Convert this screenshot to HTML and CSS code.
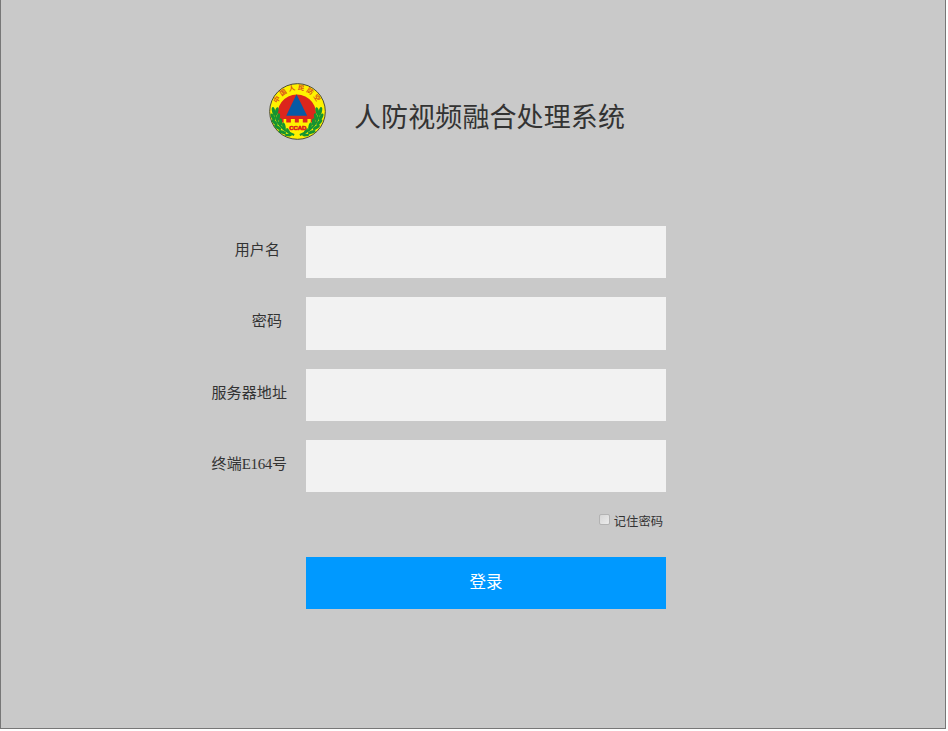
FILE: index.html
```html
<!DOCTYPE html>
<html lang="zh-CN">
<head>
<meta charset="utf-8">
<title>人防视频融合处理系统</title>
<link rel="stylesheet" href="styles.css">
</head>
<body>
<main class="window">
  <header class="brand">
    <svg class="logo" viewBox="20 20 172 172" aria-hidden="true">
      <defs>
        <path id="arc" d="M41 106a65 65 0 0 1 130 0"/>
        <g id="laurel" fill="#159331">
          <path d="M38 112Q44 158 96 177" fill="none" stroke="#159331" stroke-width="6"/>
          <ellipse cx="34" cy="105" rx="5" ry="13" transform="rotate(-12 34 105)"/>
          <ellipse cx="43" cy="106" rx="5" ry="13" transform="rotate(15 43 106)"/>
          <ellipse cx="32" cy="123" rx="5" ry="12" transform="rotate(-28 32 123)"/>
          <ellipse cx="48" cy="123" rx="5" ry="12" transform="rotate(12 48 123)"/>
          <ellipse cx="37" cy="139" rx="5" ry="12" transform="rotate(-42 37 139)"/>
          <ellipse cx="55" cy="138" rx="5" ry="12" transform="rotate(0 55 138)"/>
          <ellipse cx="46" cy="154" rx="5" ry="12" transform="rotate(-58 46 154)"/>
          <ellipse cx="65" cy="151" rx="5" ry="12" transform="rotate(-12 65 151)"/>
          <ellipse cx="60" cy="168" rx="5" ry="12" transform="rotate(-72 60 168)"/>
          <ellipse cx="78" cy="165" rx="4" ry="10" transform="rotate(-30 78 165)"/>
          <ellipse cx="78" cy="177" rx="4" ry="11" transform="rotate(-86 78 177)"/>
        </g>
      </defs>
      <circle cx="106" cy="106" r="84" fill="#fff200" stroke="#4b4a38" stroke-width="3"/>
      <path d="M48 128A58 58 0 1 1 160 128V139H146V129H136V139H122V129H110V139H98V129H86V139H72V129H64V139H52Z" fill="#dc261c"/>
      <path d="M103 54L135 119H72Z" fill="#075aa5"/>
      <use href="#laurel"/>
      <use href="#laurel" transform="translate(209 0) scale(-1 1)"/>
      <text class="logo-arc"><textPath href="#arc" startOffset="50%">中国人民防空</textPath></text>
      <text class="logo-code" x="107" y="161" textLength="52" lengthAdjust="spacingAndGlyphs">CCAD</text>
    </svg>
    <h1 class="title">人防视频融合处理系统</h1>
  </header>
  <form class="login">
    <label class="label label-user" for="user">用户名</label>
    <input class="field" id="user" type="text">
    <label class="label label-password" for="password">密码</label>
    <input class="field" id="password" type="password">
    <label class="label" for="server">服务器地址</label>
    <input class="field" id="server" type="text">
    <label class="label" for="terminal">终端<span class="code">E164</span>号</label>
    <input class="field" id="terminal" type="text">
    <label class="remember"><input class="check" type="checkbox">记住密码</label>
    <button class="submit" type="button">登录</button>
  </form>
</main>
</body>
</html>
```
FILE: styles.css
```css
* {
  box-sizing: border-box;
}

body {
  margin: 0;
  background: #fff;
  color: #333;
  font-family: "Liberation Serif", "Noto Sans CJK SC", serif;
}

.window {
  width: 946px;
  height: 729px;
  padding: 83px 0 0 205px;
  background: #c9c9c9;
  border: solid #777;
  border-width: 0 1px 1px;
}

.brand {
  display: flex;
  height: 143px;
  padding-left: 63px;
}

.logo {
  width: 57px;
  height: 57px;
}

.logo-arc {
  fill: #d9541d;
  font: bold 20px "Noto Sans CJK SC", sans-serif;
  letter-spacing: 6px;
  text-anchor: middle;
}

.logo-code {
  fill: #dc261c;
  stroke: #dc261c;
  stroke-width: 2px;
  font: bold 18px "Liberation Sans", sans-serif;
  text-anchor: middle;
}

.title {
  margin: 15px 0 0 28px;
  font-size: 27px;
  font-weight: 400;
  line-height: 40px;
  letter-spacing: 0.1px;
  white-space: nowrap;
}

.login {
  display: grid;
  grid-template-columns: 82px 360px;
  grid-template-rows: 52px 53px 52px 52px;
  column-gap: 18px;
  row-gap: 19px;
}

.label {
  justify-self: end;
  padding: 13px 1px 0 0;
  font-size: 15px;
  line-height: 22px;
  letter-spacing: 0.1px;
  white-space: nowrap;
}

.label-user {
  padding-right: 8px;
}

.label-password {
  padding-right: 6px;
}

.code {
  font-size: 15px;
  letter-spacing: -0.4px;
}

.field {
  width: 100%;
  height: 100%;
  padding: 0 12px;
  border: 0;
  border-radius: 0;
  background: #f2f2f2;
  outline: none;
}

.remember {
  display: flex;
  grid-column: 2;
  justify-self: end;
  align-items: center;
  height: 20px;
  padding: 1px 3px 0 0;
  font-size: 12.3px;
  line-height: 20px;
}

.check {
  appearance: none;
  width: 11px;
  height: 11px;
  margin: -4px 4px 0 0;
  border: 1px solid #b3b3b3;
  border-radius: 2px;
  background: linear-gradient(135deg, #d6d6d6, #ececec);
}

.submit {
  grid-column: 2;
  height: 52px;
  margin-top: 7px;
  padding: 0 0 5px;
  border: 0;
  background: #09f;
  color: #fff;
  font: 16.5px "Noto Sans CJK SC", sans-serif;
}
```
